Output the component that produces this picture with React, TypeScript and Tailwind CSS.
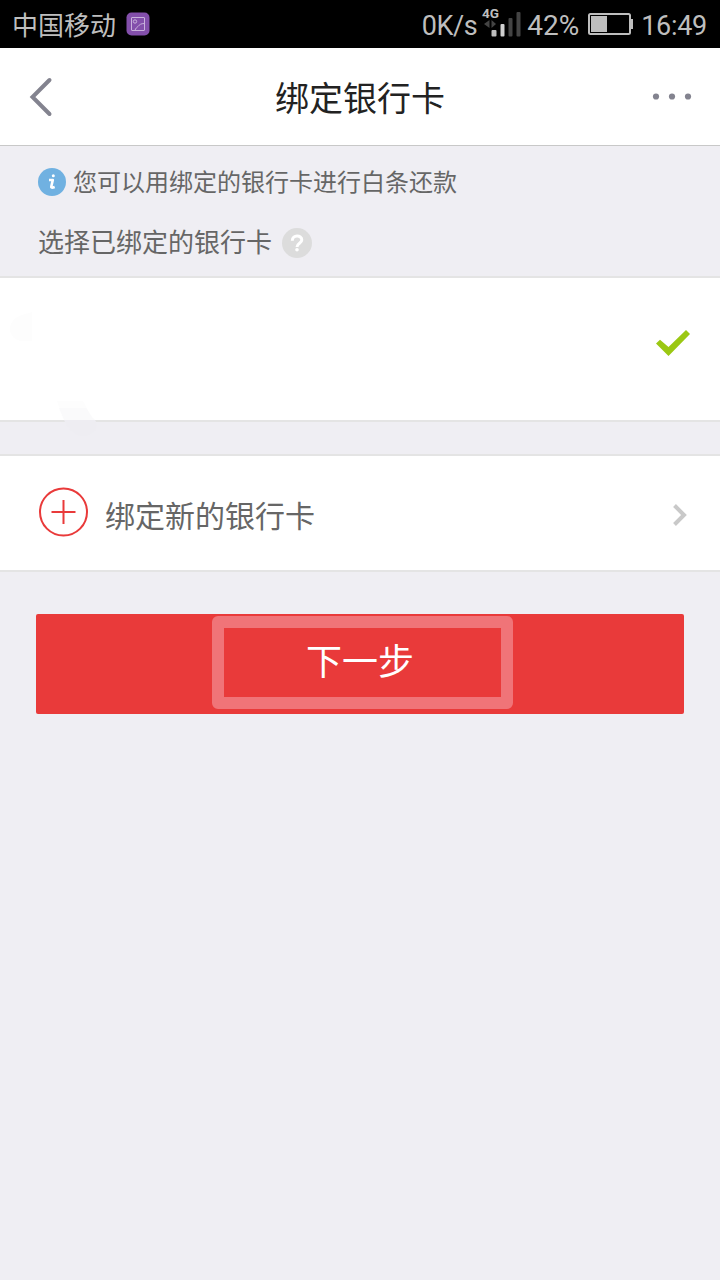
import { useState } from 'react';

// 状态栏
function StatusBar() {
  return (
    <div className="h-12 bg-black text-[#bebebe] flex items-center justify-between pl-3 pr-[13px]">
      <div className="flex items-center">
        <span className="text-[26px] leading-[48px] h-12 pt-[2px]">中国移动</span>
        <svg className="ml-[10px]" width="24" height="24" viewBox="0 0 24 24" fill="none">
          <rect x="0.5" y="0.5" width="23" height="23" rx="5" fill="#834fab" />
          <g stroke="#c9b2dc" strokeWidth="1">
            <rect x="5.5" y="5.5" width="13" height="13" rx="0.5" />
            <circle cx="9" cy="9.500" r="1.700" />
            <path d="M9 18.500C9.500 16 11 15.500 12 14.500C13.500 12.500 15 11.500 18.500 11.500" />
          </g>
        </svg>
      </div>
      <div className="flex items-center text-[28px] leading-[48px]">
        <span className="pt-[3px] text-[27px] tracking-[-0.4px]">0K/s</span>
        <svg className="ml-1" width="42" height="36" viewBox="0 0 42 36">
          <text x="1" y="12" fontSize="13" fontWeight="700" fill="#bebebe" textLength="17" lengthAdjust="spacingAndGlyphs">4G</text>
          <path d="M3 18L8.500 14V22ZM15 18L10.500 14V22Z" fill="#444" />
          <rect x="10.500" y="24" width="5" height="6.500" rx="1" fill="#bebebe" />
          <rect x="19.500" y="18" width="4" height="12.500" rx="1" fill="#d0d0d0" />
          <rect x="27.500" y="12" width="4" height="18.500" rx="1" fill="#444" />
          <rect x="35.500" y="6" width="4" height="24.500" rx="1" fill="#444" />
        </svg>
        <span className="ml-[4px] pt-[3px]">42%</span>
        <svg className="ml-[9px]" width="45" height="24" viewBox="1 0 45 24">
          <rect x="2" y="2" width="41" height="20" rx="1.500" fill="none" stroke="#bebebe" strokeWidth="2" />
          <rect x="4" y="4" width="16" height="16" fill="#bebebe" />
          <rect x="43" y="7" width="3" height="10" fill="#bebebe" />
        </svg>
        <span className="ml-2 pt-[3px] text-[27px] tracking-[-0.3px]">16:49</span>
      </div>
    </div>
  );
}

// 顶部导航栏
function NavBar() {
  return (
    <div className="h-[98px] bg-white border-b border-[#c8c8c8] flex items-center justify-between pl-[28px] pr-[28px]">
      <svg width="40" height="40" viewBox="0 0 40 40" fill="none" stroke="#83838f" strokeWidth="4" strokeLinecap="round" strokeLinejoin="miter">
        <path d="M21.500 3L4.500 20L21.500 37" />
      </svg>
      <h1 className="text-[34px] leading-[48px] pt-[5px] text-[#222]">绑定银行卡</h1>
      <svg width="40" height="8" viewBox="0 0 40 8" fill="#83838f">
        <circle cx="4" cy="3.500" r="3.100" />
        <circle cx="20" cy="3.500" r="3.100" />
        <circle cx="36" cy="3.500" r="3.100" />
      </svg>
    </div>
  );
}

export default function App() {
  const [selected, setSelected] = useState(true);

  return (
    <div className="w-full min-h-screen bg-[#efeef3] text-[#666] font-['Roboto','Noto_Sans_CJK_SC',sans-serif]">
      <StatusBar />
      <NavBar />

      {/* 提示信息 */}
      <div className="h-[130px] pl-[38px] pt-[18px]">
        <div className="flex items-center h-9">
          <svg width="28" height="28" viewBox="0 0 28 28">
            <circle cx="14" cy="14" r="14" fill="#70b1e1" />
            <path d="M11 12H14.800L13.300 18.500Q13 20 15 19.600L16.700 19" fill="none" stroke="#fff" strokeWidth="2.600" strokeLinejoin="round" />
            <circle cx="15.300" cy="7.700" r="1.500" fill="#fff" />
          </svg>
          <span className="ml-[7px] pt-[2px] text-[24px] leading-9">您可以用绑定的银行卡进行白条还款</span>
        </div>
        <div className="flex items-center h-10 mt-[22px]">
          <span className="text-[26px] leading-10 pt-px">选择已绑定的银行卡</span>
          <svg className="ml-[10px] mt-px" width="30" height="30" viewBox="0 0 30 30">
            <circle cx="15" cy="15" r="15" fill="#dcdcdc" />
            <path d="M10.300 12.700C10.300 6.500 19.800 6.700 19.800 12C19.800 15.200 15 15.200 15 19" fill="none" stroke="#fff" strokeWidth="3" />
            <circle cx="15" cy="21.800" r="1.800" fill="#fff" />
          </svg>
        </div>
      </div>

      {/* 已绑定的银行卡 */}
      <div
        className="relative h-[146px] bg-white border-y-2 border-[#e4e4e4] flex items-center justify-end pr-[30px]"
        onClick={() => setSelected(!selected)}
      >
        <svg className="absolute left-0 top-0" width="120" height="170" viewBox="0 0 120 170">
          <path d="M32 34L22 37C14 39 10 45 10 51C10 58 16 63 22 63H32Z" fill="#fdfdfd" />
          <path d="M57 123H83L89 134H61Z" fill="#fdfdfd" />
          <path d="M59 130H86L92 139L95 142H64Z" fill="#fafafb" />
          <path d="M64 142H95C101 151 90 159 83 158C74 158 68 150 64 142Z" fill="#eeedf2" />
        </svg>
        {selected && (
          <svg className="mb-[12px]" width="34" height="26" viewBox="0 0 34 26">
            <path d="M0 13.500L4 9.700L12.500 17L30 0L34 4L12.500 26Z" fill="#9bc813" />
          </svg>
        )}
      </div>

      {/* 绑定新卡 */}
      <div className="mt-8 h-[118px] bg-white border-y-2 border-[#e4e4e4] flex items-center pl-[38px] pr-[32px]">
        <svg className="-mt-0.5" width="50" height="50" viewBox="0 0 50 50" fill="none" stroke="#e93a3a" strokeWidth="2">
          <circle cx="25.500" cy="25" r="23.500" />
          <path d="M13.500 25H37.500M25.500 13V37" />
        </svg>
        <span className="ml-[17px] mt-[7px] text-[30px] leading-[44px]">绑定新的银行卡</span>
        <svg className="ml-auto mt-1" width="16" height="24" viewBox="0 0 16 24" fill="none" stroke="#c9c9c9" strokeWidth="4">
          <path d="M2.500 2.500L12 12L2.500 21.500" />
        </svg>
      </div>

      {/* 下一步 */}
      <button className="relative mt-[42px] mx-9 w-[648px] h-[100px] block bg-[#e93a3a] rounded-[2px] text-white">
        <span className="block text-[36px] leading-[50px] pb-[3px]">下一步</span>
        <span className="absolute left-[176px] top-[2px] w-[301px] h-[93px] border-[12px] border-[#f07478] rounded-[6px]" />
      </button>
    </div>
  );
}
